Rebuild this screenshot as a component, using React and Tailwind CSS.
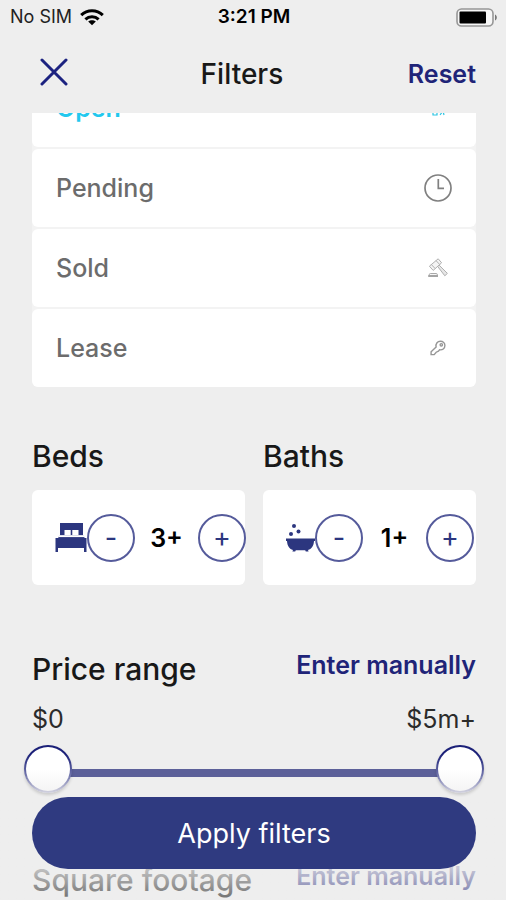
import { useState } from "react";

function WifiIcon() {
  return (
    <svg width="24" height="17" viewBox="0 0 24 17" fill="none" stroke="#000" strokeWidth="3">
      <path d="M1.2 6.2C7.2 .4 16.8 .4 22.8 6.2" />
      <path d="M5.4 10.3c3.7-3.5 9.5-3.5 13.2 0" />
      <path d="M12 16.2 8.2 12.6c2.1-1.9 5.5-1.9 7.6 0z" fill="#000" stroke="none" />
    </svg>
  );
}

function BatteryIcon() {
  return (
    <svg width="42" height="19" viewBox="0 0 42 19" fill="none">
      <rect x="1" y="1" width="36" height="17" rx="4.5" stroke="#969696" strokeWidth="1.6" fill="#f6f6f6" />
      <rect x="3.5" y="3.5" width="26.5" height="12" rx="1" fill="#000" />
      <path d="M39 6.5c2.4.8 2.4 5.2 0 6z" fill="#777" />
    </svg>
  );
}

function OpenIcon() {
  return (
    <svg width="16" height="16" viewBox="0 0 16 16" fill="none" stroke="#2cc5e3" strokeWidth="1.2">
      <path d="M2 7 8 2l6 5M3 7v8h4v-4h3M10 15l3-4 1 4" />
    </svg>
  );
}

function ClockIcon() {
  return (
    <svg width="28" height="28" viewBox="0 0 28 28" fill="none" stroke="#808080" strokeWidth="1.7">
      <circle cx="14" cy="14" r="13" />
      <path d="M14.3 5v9.3H20" />
    </svg>
  );
}

function GavelIcon() {
  return (
    <svg width="20" height="20" viewBox="0 0 20 20" fill="#e6e6e6" stroke="#b0b0b0" strokeWidth="1">
      <path d="m9.600 8.400 7.200 9.400 2.600-2.400-8.400-8.400z" />
      <path d="M1.400 8.200 10.200.8l3.400 4-8.400 7.600z" fill="#f4f4f4" />
      <path d="M3.400 6.600 7.200 10.600M8 2.600l3.800 4" />
      <path d="M1.200 16.800c0-.8.4-1.200 1.200-1.200h5.800c.8 0 1.200.4 1.200 1.200" fill="none" stroke="#a0a0a0" />
      <path d="M.2 18h9.800" stroke="#8d8d8d" strokeWidth="1.600" />
    </svg>
  );
}

function KeyIcon() {
  return (
    <svg width="16" height="16" viewBox="0 0 16 16" fill="none" stroke="#969696" strokeWidth="1.4">
      <path d="M6.1 6.9C5.400 4 7.300 1.200 10.400 1.200c2.700 0 4.500 1.900 4.500 4.300 0 2.900-2.500 4.900-5.300 4.300L8.400 11.200 6.200 12.200 4.200 14.600H1.100v-2.900z" />
      <circle cx="11.300" cy="4.800" r="1.200" />
    </svg>
  );
}

function BedIcon() {
  return (
    <svg width="32" height="29" viewBox="0 0 32 29" fill="#2c367f">
      <path d="M5 0h23v12H5z" />
      <path d="M9.500 7h6.200v5H9.500zM17.300 7h6.200v5h-6.200z" fill="#fff" />
      <path d="M4.500 12.500h24L31 18H1.500z" />
      <path d="M4 13.200h25" stroke="#fff" strokeWidth="1.800" />
      <path d="M.5 15h31v14H29v-4H3v4H.5z" />
    </svg>
  );
}

function BathIcon() {
  return (
    <svg width="29" height="29" viewBox="0 0 29 29" fill="#2c367f">
      <circle cx="8" cy="3" r="2" />
      <circle cx="12.500" cy="8.500" r="2" />
      <circle cx="5" cy="11" r="2" />
      <path d="M0 15.500h29v2.500h-1c-.3 5-2.500 8-6 9l.6 1.500h-2.800l-.6-1.300h-9.400L9.200 28.500H6.400l.6-1.500c-3.500-1-5.700-4-6-9H0z" />
    </svg>
  );
}

const statuses = [
  { id: "open", label: "Open", icon: OpenIcon },
  { id: "pending", label: "Pending", icon: ClockIcon },
  { id: "sold", label: "Sold", icon: GavelIcon },
  { id: "lease", label: "Lease", icon: KeyIcon },
];

const stepButton =
  "w-12 h-12 shrink-0 rounded-full border-2 border-[#555b9b] text-[27px] leading-8 text-[#2c367f] cursor-pointer";

const thumb =
  "absolute inset-0 w-full h-12 appearance-none bg-transparent pointer-events-none outline-none [&::-webkit-slider-thumb]:appearance-none [&::-webkit-slider-thumb]:pointer-events-auto [&::-webkit-slider-thumb]:w-12 [&::-webkit-slider-thumb]:h-12 [&::-webkit-slider-thumb]:rounded-full [&::-webkit-slider-thumb]:border-2 [&::-webkit-slider-thumb]:border-transparent [&::-webkit-slider-thumb]:[background:linear-gradient(#fff_50%,#f4f4f4)_padding-box,linear-gradient(#1b2078_20%,#6a6ea8_60%,#d4d4e0)_border-box] [&::-webkit-slider-thumb]:shadow-[0_2px_3px_rgba(0,0,0,0.15)]";

function Counter({ title, icon: Icon, value, setValue }) {
  return (
    <div className="flex-1 min-w-0">
      <h2 className="text-[30px] leading-9 font-medium">{title}</h2>

      <div className="mt-4 h-[95px] rounded-md bg-white pl-[23px] flex items-center">
        <span className="shrink-0">
          <Icon />
        </span>

        <button
          type="button"
          aria-label={`Fewer ${title}`}
          className={stepButton}
          onClick={() => setValue(Math.max(0, value - 1))}
        >
          -
        </button>

        <span className="w-[63px] shrink-0 text-center text-[25px] leading-8 font-semibold text-black">
          {value}+
        </span>

        <button
          type="button"
          aria-label={`More ${title}`}
          className={stepButton}
          onClick={() => setValue(value + 1)}
        >
          +
        </button>
      </div>
    </div>
  );
}

function RangeHeading({ title }) {
  return (
    <div className="flex items-start justify-between">
      <h2 className="pt-0.5 text-[30px] leading-9 font-medium">{title}</h2>
      <button
        type="button"
        className="text-[25px] leading-8 font-semibold text-[#1f2478] cursor-pointer"
      >
        Enter manually
      </button>
    </div>
  );
}

export default function App() {
  const [status, setStatus] = useState("open");
  const [beds, setBeds] = useState(3);
  const [baths, setBaths] = useState(1);
  const [low, setLow] = useState(0);
  const [high, setHigh] = useState(100);

  return (
    <div className="relative h-screen overflow-hidden flex flex-col bg-[#eeeeee] text-[#181818] font-[Inter,'Liberation_Sans',sans-serif]">

      <div className="h-[34px] shrink-0 grid grid-cols-3 items-center pl-[10px] pr-2 text-[18px] leading-6 text-[#222]">
        <div className="flex items-center gap-2">
          <span>No SIM</span>
          <WifiIcon />
        </div>
        <span className="text-center text-[19px] font-semibold text-black">3:21 PM</span>
        <div className="flex justify-end">
          <BatteryIcon />
        </div>
      </div>

      <header className="h-[79px] shrink-0 flex items-center justify-between pl-8 pr-[30px]">
        <button
          type="button"
          aria-label="Close"
          className="w-11 h-11 pb-1 flex items-center justify-center cursor-pointer"
        >
          <svg width="28" height="28" viewBox="0 0 28 28" stroke="#1c2280" strokeWidth="3" strokeLinecap="round">
            <path d="M2 2l24 24M26 2 2 26" />
          </svg>
        </button>
        <h1 className="text-[28px] leading-9 font-medium">Filters</h1>
        <button
          type="button"
          className="text-[25px] leading-8 font-semibold text-[#1f2478] cursor-pointer"
        >
          Reset
        </button>
      </header>

      <main className="flex-1 min-h-0 overflow-hidden pl-8 pr-[30px]">

        <div className="-mt-11 flex flex-col gap-0.5 rounded-md bg-[#f3f3f3]">
          {statuses.map(({ id, label, icon: Icon }) => (
            <button
              key={id}
              type="button"
              aria-pressed={status === id}
              onClick={() => setStatus(id)}
              className={`h-[78px] rounded-md bg-white px-6 flex items-center justify-between text-[25px] leading-8 cursor-pointer ${
                status === id
                  ? "font-semibold text-[#22c8ee]"
                  : "font-medium text-[#6c6c6c]"
              }`}
            >
              <span>{label}</span>
              <span className="w-7 flex justify-center">
                <Icon />
              </span>
            </button>
          ))}
        </div>

        <div className="mt-[51px] flex gap-[18px]">
          <Counter title="Beds" icon={BedIcon} value={beds} setValue={setBeds} />
          <Counter title="Baths" icon={BathIcon} value={baths} setValue={setBaths} />
        </div>

        <section className="mt-16">
          <RangeHeading title="Price range" />

          <div className="mt-4 flex justify-between text-[25px] leading-8 text-[#2b2b2b]">
            <span>$0</span>
            <span>$5m+</span>
          </div>

          <div className="relative -mx-2 mt-[10px] h-12 flex items-center">
            <div className="mx-6 mt-2 h-2 flex-1 bg-[#5c6099]"></div>
            <input
              type="range"
              aria-label="Minimum price"
              value={low}
              onChange={(e) => setLow(Math.min(Number(e.target.value), high))}
              className={thumb}
            />
            <input
              type="range"
              aria-label="Maximum price"
              value={high}
              onChange={(e) => setHigh(Math.max(Number(e.target.value), low))}
              className={thumb}
            />
          </div>
        </section>

        <section className="mt-[67px]">
          <RangeHeading title="Square footage" />
        </section>

      </main>

      {/* fades the list out underneath the button */}
      <div className="absolute inset-x-0 bottom-0 pl-8 pr-[30px] pb-[31px] pointer-events-none bg-linear-to-t from-[#eeeeee]/40 to-[#eeeeee]/80 to-[32px]">
        <button
          type="button"
          className="w-full h-[72px] rounded-full bg-[#2f3a80] pt-0.5 text-[27px] leading-9 text-white pointer-events-auto cursor-pointer"
        >
          Apply filters
        </button>
      </div>

    </div>
  );
}
